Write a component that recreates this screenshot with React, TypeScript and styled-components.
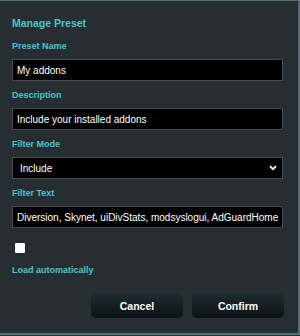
import { createGlobalStyle, styled } from 'styled-components'

const GlobalStyle = createGlobalStyle`
  html, body {
    margin: 0;
    padding: 0;
    background: #272e32;
  }
  body {
    font-family: 'Liberation Sans', Arial, sans-serif;
  }
`

const Dialog = styled.div`
  box-sizing: border-box;
  width: 300px;
  height: 335px;
  background: #272e32;
  border-top: 1px solid #566a78;
  border-right: 2px solid #566a78;
  border-bottom: 2px solid #566a78;
  padding: 16px 14px 0 12px;
  display: flex;
  flex-direction: column;
`

const Title = styled.h2`
  margin: 0 0 10px;
  font-size: 10.5px;
  line-height: 13px;
  font-weight: bold;
  color: #4cc4c6;
`

const Field = styled.div`
  display: flex;
  flex-direction: column;
  margin-bottom: 8px;
`

const Label = styled.label`
  display: block;
  font-size: 9px;
  line-height: 12px;
  font-weight: bold;
  color: #4cc4c6;
  margin-bottom: 7px;
`

const TextInput = styled.input`
  box-sizing: border-box;
  width: 271px;
  height: 22px;
  margin: 0;
  padding: 0 4px;
  background: #000;
  border: 1px solid #4a4d4f;
  color: #fff;
  font-family: 'Liberation Sans', Arial, sans-serif;
  font-size: 10px;
  outline: none;
`

const SelectWrap = styled.div`
  position: relative;
  width: 271px;
  height: 22px;
`

const Select = styled.select`
  box-sizing: border-box;
  appearance: none;
  width: 100%;
  height: 22px;
  margin: 0;
  padding: 0 7px;
  background: #000;
  border: 1px solid #4a4d4f;
  border-radius: 0;
  color: #fff;
  font-family: 'Liberation Sans', Arial, sans-serif;
  font-size: 10px;
  outline: none;
`

const Chevron = styled.svg`
  position: absolute;
  right: 6px;
  top: 8px;
  pointer-events: none;
`

const Check = styled.input`
  appearance: none;
  box-sizing: border-box;
  width: 10px;
  height: 10px;
  margin: 7px 0 11px 3px;
  background: #fff;
  border: none;
  border-radius: 1px;
`

const CheckLabel = styled(Label)`
  margin-bottom: 17px;
`

const Actions = styled.div`
  display: flex;
  justify-content: flex-end;
  gap: 9px;
`

const Button = styled.button`
  width: 92px;
  height: 25px;
  border: none;
  border-radius: 5px;
  background: linear-gradient(to bottom, #1e2d32 0%, #0c1012 100%);
  color: #fff;
  font-family: 'Liberation Sans', Arial, sans-serif;
  font-size: 10.5px;
  font-weight: bold;
  cursor: pointer;
`

export default function App() {
  return (
    <>
      <GlobalStyle />
      <Dialog>
        <Title>Manage Preset</Title>
        <Field>
          <Label>Preset Name</Label>
          <TextInput defaultValue="My addons" />
        </Field>
        <Field>
          <Label>Description</Label>
          <TextInput defaultValue="Include your installed addons" />
        </Field>
        <Field>
          <Label>Filter Mode</Label>
          <SelectWrap>
            <Select defaultValue="include">
              <option value="include">Include</option>
              <option value="exclude">Exclude</option>
            </Select>
            <Chevron width="8" height="6" viewBox="0 0 8 6">
              <path d="M1 1.2 L4 4.2 L7 1.2" fill="none" stroke="#fff" strokeWidth="1.8" />
            </Chevron>
          </SelectWrap>
        </Field>
        <Field>
          <Label>Filter Text</Label>
          <TextInput defaultValue="Diversion, Skynet, uiDivStats, modsyslogui, AdGuardHome" />
        </Field>
        <Check type="checkbox" />
        <CheckLabel>Load automatically</CheckLabel>
        <Actions>
          <Button>Cancel</Button>
          <Button>Confirm</Button>
        </Actions>
      </Dialog>
    </>
  )
}
